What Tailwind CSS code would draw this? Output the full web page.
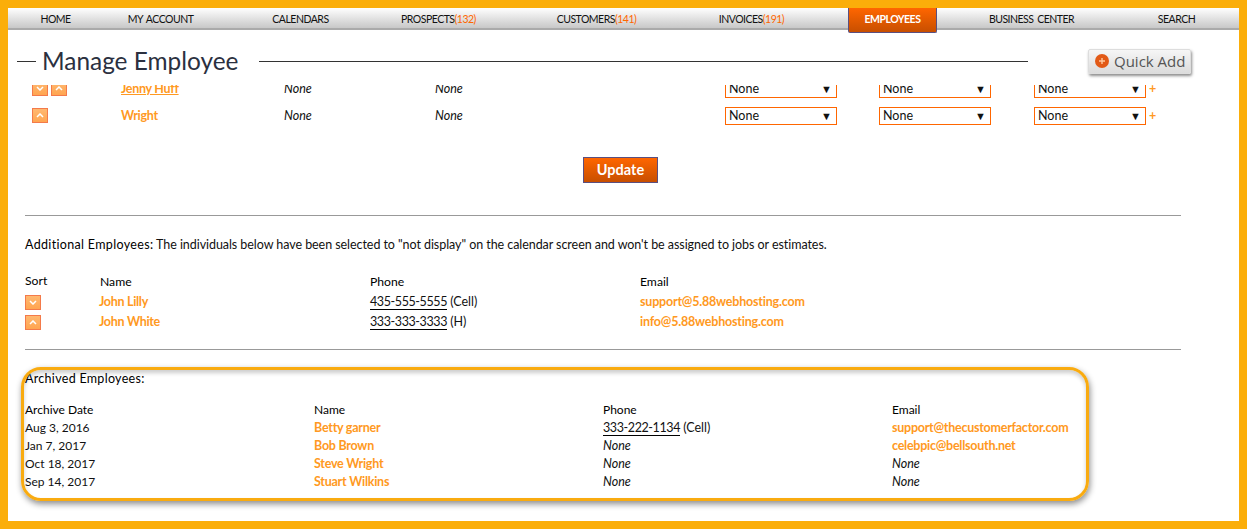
<!DOCTYPE html>
<html>
<head>
    <meta charset="UTF-8">
    <title>Manage Employee</title>
    <script src="https://cdn.jsdelivr.net/npm/@tailwindcss/browser@4"></script>
</head>
<body class="bg-[#fbae0a]">
    <div class="w-[1247px] h-[529px] border-8 border-[#fbae0a] bg-white overflow-hidden flex flex-col relative font-['Lato','Liberation_Sans',sans-serif] text-[12.5px] leading-[18px] text-[#111]">
        <!-- top nav -->
        <nav class="h-[22px] pt-[2px] shrink-0 flex items-center text-[10.5px] tracking-[-0.5px] [word-spacing:1.5px] uppercase text-[#111] border-b-2 border-[#aaa] bg-gradient-to-b from-white to-[#c8c8c8]">
            <a class="w-[95px] text-center">Home</a>
            <a class="w-[115px] text-center">My Account</a>
            <a class="w-[165px] text-center">Calendars</a>
            <a class="w-[111px] text-center">Prospects<span class="text-[#f60]">(132)</span></a>
            <a class="w-[205px] text-center">Customers<span class="text-[#f60]">(141)</span></a>
            <a class="w-[105px] text-center">Invoices<span class="text-[#f60]">(191)</span></a>
            <a class="w-[89px] ml-[44px] -mt-[2px] h-[25px] self-start text-center font-bold text-white leading-[22px] bg-gradient-to-b from-[#ff6600] to-[#c84f00] border-x border-b border-[#5a4f80] rounded-b-[2px]">Employees</a>
            <a class="w-[101px] ml-[44px] text-center">Business Center</a>
            <a class="w-[125px] ml-[32px] text-center">Search</a>
        </nav>

        <!-- page title -->
        <header class="h-[55px] pt-[7px] shrink-0 flex items-center pl-[9px]">
            <div class="w-[19px] h-px bg-[#333]"></div>
            <h1 class="ml-[6px] w-[196px] text-[24.4px] leading-[30px] text-[#2b3040] whitespace-nowrap">Manage Employee</h1>
            <div class="ml-[21px] w-[769px] h-px bg-[#333]"></div>
            <button class="ml-[60px] w-[103px] h-[25px] flex items-center gap-[5px] pl-[6px] rounded-[2px] text-[15px] text-[#555] font-['Open_Sans',sans-serif] bg-gradient-to-b from-[#f6f6f6] to-[#dcdcdc] border border-[#ddd] shadow-[1px_2px_3px_rgba(0,0,0,0.45)] whitespace-nowrap">
                <svg width="14" height="14" viewBox="0 0 14 14"><circle cx="7" cy="7" r="7" fill="#e25a17"/><path d="M7 4v6M4 7h6" stroke="#ffc9a0" stroke-width="1.4"/></svg>
                Quick Add
            </button>
        </header>

        <main class="flex-1 overflow-hidden">
            <div class="-mt-[10px]">
                <!-- sortable rows, first one scrolled under the header -->
                <div class="pl-[24px] h-[27px] grid grid-cols-[89px_163px_151px_290px_154px_155px_115px_auto] items-center">
                    <div class="flex gap-[3px]">
                        <span class="w-4 h-[15px] flex items-center justify-center bg-gradient-to-b from-[#ffb870] to-[#ffa550] border border-[#f47a4a]"><svg width="8" height="5" viewBox="0 0 8 5"><path d="M1 1l3 3 3-3" fill="none" stroke="#fff" stroke-width="1.5"/></svg></span>
                        <span class="w-4 h-[15px] flex items-center justify-center bg-gradient-to-b from-[#ffb870] to-[#ffa550] border border-[#f47a4a]"><svg width="8" height="5" viewBox="0 0 8 5"><path d="M1 4l3-3 3 3" fill="none" stroke="#fff" stroke-width="1.5"/></svg></span>
                    </div>
                    <a class="pt-px tracking-[-0.3px] font-bold text-[#ff9922] underline">Jenny Huff</a>
                    <i class="pt-px">None</i>
                    <i class="pt-px">None</i>
                    <div class="w-[112px] h-[18px] border border-[#f60] flex items-center justify-between pl-[3px] pr-[4px]"><span class="pt-px">None</span><span class="text-[11px]">▼</span></div>
                    <div class="w-[112px] h-[18px] border border-[#f60] flex items-center justify-between pl-[3px] pr-[4px]"><span class="pt-px">None</span><span class="text-[11px]">▼</span></div>
                    <div class="w-[112px] h-[18px] border border-[#f60] flex items-center justify-between pl-[3px] pr-[4px]"><span class="pt-px">None</span><span class="text-[11px]">▼</span></div>
                    <span class="font-bold text-[#ff9922]">+</span>
                </div>
                <div class="pl-[24px] h-[27px] grid grid-cols-[89px_163px_151px_290px_154px_155px_115px_auto] items-center">
                    <div class="flex gap-[3px]">
                        <span class="w-4 h-[15px] flex items-center justify-center bg-gradient-to-b from-[#ffb870] to-[#ffa550] border border-[#f47a4a]"><svg width="8" height="5" viewBox="0 0 8 5"><path d="M1 4l3-3 3 3" fill="none" stroke="#fff" stroke-width="1.5"/></svg></span>
                    </div>
                    <a class="pt-px tracking-[-0.3px] font-bold text-[#ff9922]">Wright</a>
                    <i class="pt-px">None</i>
                    <i class="pt-px">None</i>
                    <div class="w-[112px] h-[18px] border border-[#f60] flex items-center justify-between pl-[3px] pr-[4px]"><span class="pt-px">None</span><span class="text-[11px]">▼</span></div>
                    <div class="w-[112px] h-[18px] border border-[#f60] flex items-center justify-between pl-[3px] pr-[4px]"><span class="pt-px">None</span><span class="text-[11px]">▼</span></div>
                    <div class="w-[112px] h-[18px] border border-[#f60] flex items-center justify-between pl-[3px] pr-[4px]"><span class="pt-px">None</span><span class="text-[11px]">▼</span></div>
                    <span class="font-bold text-[#ff9922]">+</span>
                </div>

                <button class="block mt-[28px] ml-[575px] w-[75px] h-[26px] text-[14.5px] font-bold text-white bg-gradient-to-b from-[#ff6600] to-[#c84f00] border border-[#5a4f80]">Update</button>

                <div class="mt-[32px] mx-[17px] w-[1156px] h-px bg-[#999]"></div>

                <!-- additional employees -->
                <div class="ml-[17px]">
                    <p class="mt-[20px] tracking-[-0.06px]"><span class="text-black tracking-[0.33px]">Additional Employees:</span> The individuals below have been selected to "not display" on the calendar screen and won't be assigned to jobs or estimates.</p>
                    <div class="mt-[19px] grid grid-cols-[75px_270px_270px_auto] text-[12.2px] text-black">
                        <span class="-mt-px">Sort</span><span>Name</span><span>Phone</span><span>Email</span>
                    </div>
                    <div class="mt-[2px] grid grid-cols-[74px_271px_270px_auto] items-center">
                        <span class="w-4 h-[15px] flex items-center justify-center bg-gradient-to-b from-[#ffb870] to-[#ffa550] border border-[#f47a4a]"><svg width="8" height="5" viewBox="0 0 8 5"><path d="M1 1l3 3 3-3" fill="none" stroke="#fff" stroke-width="1.5"/></svg></span>
                        <a class="tracking-[-0.3px] font-bold text-[#ff9922]">John Lilly</a>
                        <span><span class="border-b border-black tracking-[-0.4px]">435-555-5555</span> (Cell)</span>
                        <a class="tracking-[-0.2px] font-bold text-[#ff9922]">support@5.88webhosting.com</a>
                    </div>
                    <div class="mt-[2px] grid grid-cols-[74px_271px_270px_auto] items-center">
                        <span class="w-4 h-[15px] flex items-center justify-center bg-gradient-to-b from-[#ffb870] to-[#ffa550] border border-[#f47a4a]"><svg width="8" height="5" viewBox="0 0 8 5"><path d="M1 4l3-3 3 3" fill="none" stroke="#fff" stroke-width="1.5"/></svg></span>
                        <a class="tracking-[-0.3px] font-bold text-[#ff9922]">John White</a>
                        <span><span class="border-b border-black tracking-[-0.4px]">333-333-3333</span> (H)</span>
                        <a class="tracking-[-0.2px] font-bold text-[#ff9922]">info@5.88webhosting.com</a>
                    </div>
                    <div class="mt-[18px] w-[1156px] h-px bg-[#999]"></div>

                    <!-- archived employees -->
                    <p class="mt-[20px] text-black tracking-[0.3px]">Archived Employees:</p>
                    <div class="mt-[13px] grid grid-cols-[289px_289px_289px_auto] text-[12px]">
                        <span class="text-black">Archive Date</span><span class="text-black">Name</span><span class="text-black">Phone</span><span class="text-black">Email</span>
                        <span>Aug 3, 2016</span><a class="text-[12.5px] tracking-[-0.25px] font-bold text-[#ff9922]">Betty garner</a><span class="text-[12.5px]"><span class="border-b border-black tracking-[-0.4px]">333-222-1134</span> (Cell)</span><a class="text-[12.5px] tracking-[-0.25px] font-bold text-[#ff9922]">support@thecustomerfactor.com</a>
                        <span>Jan 7, 2017</span><a class="text-[12.5px] tracking-[-0.25px] font-bold text-[#ff9922]">Bob Brown</a><i class="text-[12.5px]">None</i><a class="text-[12.5px] tracking-[-0.25px] font-bold text-[#ff9922]">celebpic@bellsouth.net</a>
                        <span>Oct 18, 2017</span><a class="text-[12.5px] tracking-[-0.25px] font-bold text-[#ff9922]">Steve Wright</a><i class="text-[12.5px]">None</i><i class="text-[12.5px]">None</i>
                        <span>Sep 14, 2017</span><a class="text-[12.5px] tracking-[-0.25px] font-bold text-[#ff9922]">Stuart Wilkins</a><i class="text-[12.5px]">None</i><i class="text-[12.5px]">None</i>
                    </div>
                </div>
            </div>
        </main>

        <!-- highlight drawn over the archived section -->
        <div class="absolute left-[13px] top-[359px] w-[1068px] h-[134px] rounded-[20px] border-[3px] border-[#f9ab10] shadow-[1px_3px_6px_rgba(0,0,0,0.45),inset_0_3px_4px_rgba(0,0,0,0.2)] pointer-events-none"></div>
    </div>
</body>
</html>
